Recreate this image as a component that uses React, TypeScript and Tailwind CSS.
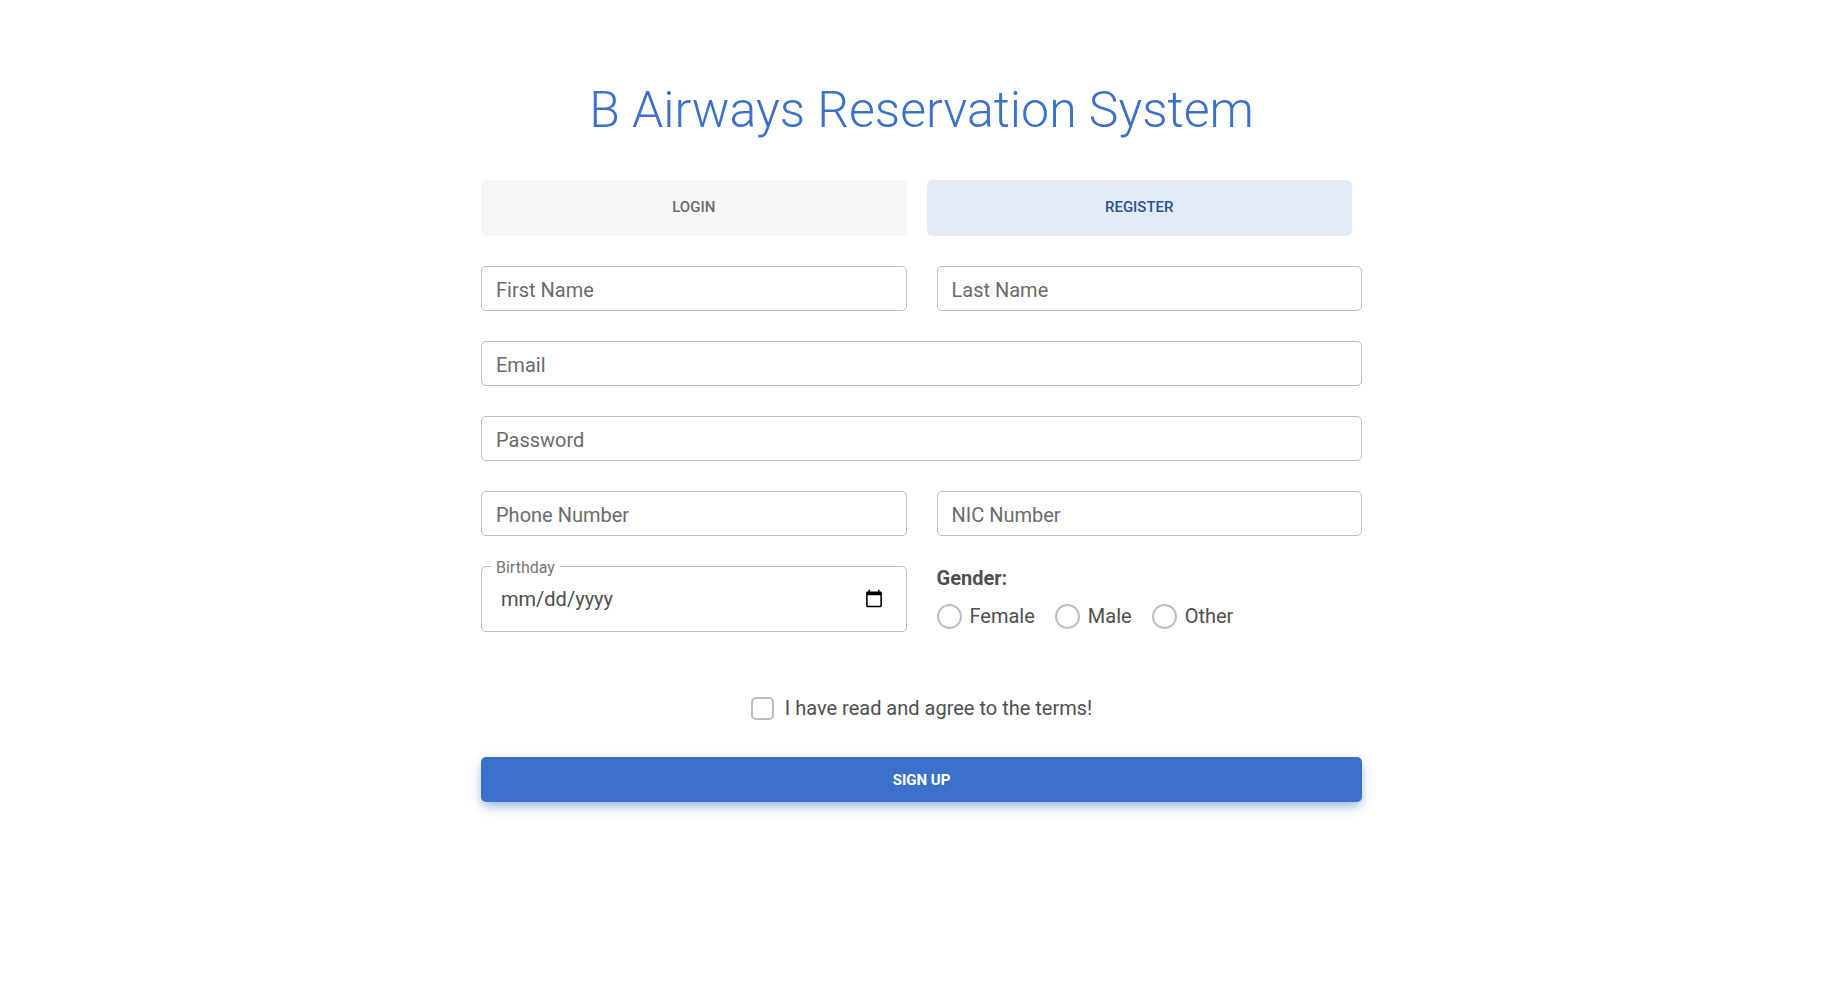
import { useState } from "react";

type FieldProps = { id: string; label: string; type?: string; wide?: boolean };

function Field({ id, label, type = "text", wide = false }: FieldProps) {
  return (
    <div className={wide ? "relative sm:col-span-2" : "relative"}>
      <input
        id={id}
        name={id}
        type={type}
        placeholder=" "
        className="peer block h-[45px] w-full rounded-[5px] border border-[#bdbdbd] bg-white px-[14px] text-[20px] text-[#4f4f4f] outline-none focus:border-[#3b71ca]"
      />
      <label
        htmlFor={id}
        className="pointer-events-none absolute -top-2 left-[10px] bg-white px-[5px] text-[16px] leading-5 text-[#757575] peer-placeholder-shown:top-2 peer-placeholder-shown:text-[20px] peer-placeholder-shown:leading-8 peer-placeholder-shown:text-[#6b6b6b]"
      >
        {label}
      </label>
    </div>
  );
}

const genders = ["Female", "Male", "Other"];

export default function App() {
  const [gender, setGender] = useState("");
  const [agreed, setAgreed] = useState(false);

  return (
    <main className="min-h-screen bg-white px-6 py-20 font-['Roboto',sans-serif] text-[20px] leading-8 text-[#4f4f4f]">
      <div className="mx-auto max-w-[881px]">
        <h1 className="mb-10 text-center text-[50px] leading-[60px] font-light text-[#3b71ca]">
          B Airways Reservation System
        </h1>

        <nav className="mb-[30px] grid grid-cols-2 gap-5 pr-[10px] text-[15px] leading-5 font-medium">
          <button type="button" className="h-14 rounded-[5px] bg-[#f7f7f7] pb-0.5 text-[#6b6b6b]">
            LOGIN
          </button>
          <button type="button" className="h-14 rounded-[5px] bg-[#e3ebf7] pb-0.5 text-[#285192]">
            REGISTER
          </button>
        </nav>

        <form onSubmit={(e) => e.preventDefault()}>
          <div className="grid gap-[30px] sm:grid-cols-2">
            <Field id="firstName" label="First Name" />
            <Field id="lastName" label="Last Name" />
            <Field id="email" label="Email" type="email" wide />
            <Field id="password" label="Password" type="password" wide />
            <Field id="phone" label="Phone Number" type="tel" />
            <Field id="nic" label="NIC Number" />

            <div className="relative">
              <label
                htmlFor="birthday"
                className="absolute -top-2 left-[10px] bg-white px-[5px] text-[16px] leading-5 text-[#757575]"
              >
                Birthday
              </label>
              <input
                id="birthday"
                name="birthday"
                type="date"
                className="block h-[66px] w-full rounded-[5px] border border-[#bdbdbd] bg-white pr-5 pl-[19px] text-[20px] text-[#4f4f4f] outline-none focus:border-[#3b71ca] [&::-webkit-datetime-edit-day-field]:p-0 [&::-webkit-datetime-edit-month-field]:p-0 [&::-webkit-datetime-edit-year-field]:p-0"
              />
            </div>

            <fieldset>
              <legend className="text-[20px] leading-6 font-bold">Gender:</legend>
              <div className="mt-[10px] flex flex-wrap gap-5">
                {genders.map((g) => (
                  <label key={g} className="flex items-center gap-2">
                    <input
                      type="radio"
                      name="gender"
                      value={g}
                      checked={gender === g}
                      onChange={() => setGender(g)}
                      className="size-[25px] appearance-none rounded-full border-2 border-[#bdbdbd] bg-white checked:border-[#3b71ca] checked:bg-[#3b71ca] checked:shadow-[inset_0_0_0_4px_white]"
                    />
                    {g}
                  </label>
                ))}
              </div>
            </fieldset>
          </div>

          <div className="mt-[60px] flex justify-center">
            <label className="flex items-center gap-[11px]">
              <input
                type="checkbox"
                checked={agreed}
                onChange={(e) => setAgreed(e.target.checked)}
                className="size-[23px] appearance-none rounded-[5px] border-2 border-[#bdbdbd] bg-white checked:border-[#3b71ca] checked:bg-[#3b71ca]"
              />
              I have read and agree to the terms!
            </label>
          </div>

          <button
            type="submit"
            className="mt-[33px] block h-[45px] w-full rounded-[5px] bg-[#3b71ca] text-[15px] leading-5 font-bold text-white shadow-[0_5px_11px_-5px_rgba(59,113,202,0.6),0_5px_12px_0_rgba(59,113,202,0.25)]"
          >
            SIGN UP
          </button>
        </form>
      </div>
    </main>
  );
}
